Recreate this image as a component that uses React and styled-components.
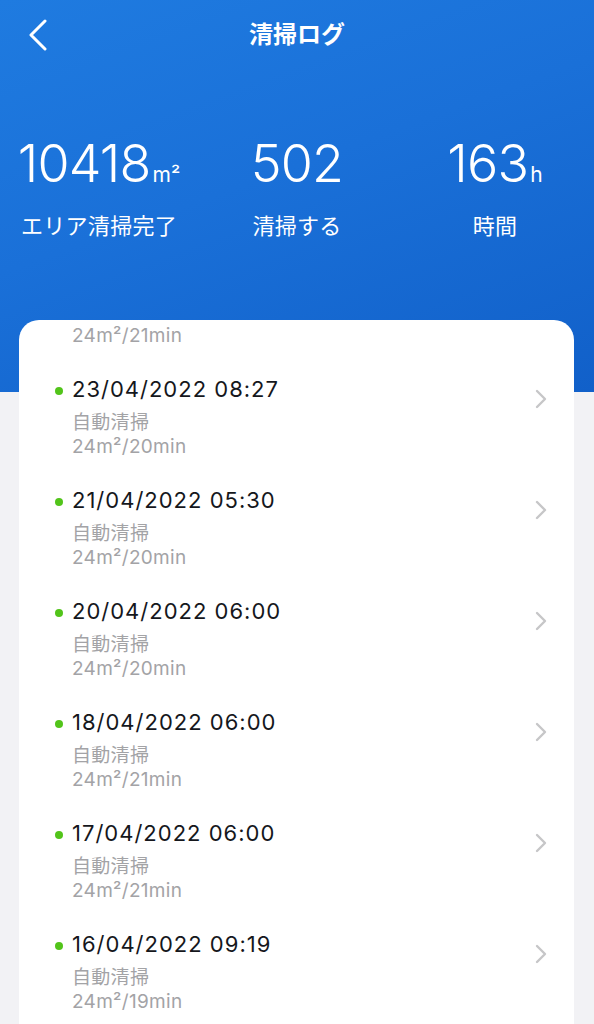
import React from "react";
import styled, { createGlobalStyle } from "styled-components";

const Global = createGlobalStyle`
  html, body { margin: 0; padding: 0; }
  body {
    background: #f2f2f5;
    font-family: Inter, "Noto Sans CJK JP", "Noto Sans", sans-serif;
    -webkit-font-smoothing: antialiased;
    overflow: hidden;
  }
`;

const Page = styled.div`
  width: 594px;
  height: 1024px;
  overflow: hidden;
  background: #f2f2f5;
`;

const Header = styled.header`
  height: 392px;
  background: linear-gradient(160deg, #1f7be0 0%, #1a70d8 45%, #1160c9 100%);
  color: #fff;
  display: flex;
  flex-direction: column;
`;

const NavBar = styled.div`
  height: 70px;
  display: grid;
  grid-template-columns: 80px 1fr 80px;
  align-items: center;
`;

const BackButton = styled.button`
  background: none;
  border: 0;
  padding: 0 0 0 28px;
  height: 40px;
  display: flex;
  align-items: center;
  cursor: pointer;
`;

const Title = styled.h1`
  margin: 0;
  text-align: center;
  font-size: 24px;
  font-weight: 700;
  line-height: 70px;
  color: #fff;
`;

const Stats = styled.div`
  display: grid;
  grid-template-columns: repeat(3, 1fr);
  margin-top: 64px;
`;

const Stat = styled.div`
  display: flex;
  flex-direction: column;
  align-items: center;
`;

const StatValue = styled.div`
  font-family: Inter, "Noto Sans", sans-serif;
  font-size: 52px;
  font-weight: 300;
  height: 60px;
  line-height: 60px;
  letter-spacing: -0.8px;
  white-space: nowrap;
`;

const Unit = styled.span`
  font-size: 21px;
  font-weight: 400;
  line-height: 1;
  letter-spacing: 0;
  margin-left: 2px;
`;

const StatLabel = styled.div`
  margin-top: 19px;
  font-size: 22px;
  line-height: 26px;
  font-weight: 400;
  letter-spacing: 0.3px;
  white-space: nowrap;
`;

const Card = styled.section`
  margin: -72px 20px 0 19px;
  background: #fff;
  border-radius: 20px 20px 0 0;
  height: 760px;
  overflow: hidden;
`;

const List = styled.ul`
  list-style: none;
  margin: -70px 0 0;
  padding: 0;
`;

const Row = styled.li`
  position: relative;
  display: grid;
  grid-template-columns: 8px 1fr;
  column-gap: 9px;
  padding: 14px 0 13px 36px;
`;

const Dot = styled.span`
  width: 8px;
  height: 8px;
  border-radius: 50%;
  background: #52c41a;
  margin-top: 12px;
`;

const Info = styled.div`
  display: flex;
  flex-direction: column;
`;

const DateText = styled.div`
  font-family: Inter, "Noto Sans", sans-serif;
  font-size: 22px;
  line-height: 28px;
  color: #15171c;
  letter-spacing: 1px;
  margin-bottom: 8px;
`;

const SubText = styled.div`
  font-size: 19px;
  line-height: 24px;
  color: #a3a3a6;
  letter-spacing: 0.3px;
`;

const Chevron = styled.svg`
  position: absolute;
  right: 26px;
  top: 28px;
`;

const BackIcon = () => (
  <svg width="20" height="32" viewBox="0 0 20 32" fill="none">
    <path d="M17 2 L3 16 L17 30" stroke="#fff" strokeWidth="3" strokeLinecap="round" strokeLinejoin="round" />
  </svg>
);

const logs = [
  { date: "24/04/2022 06:00", mode: "自動清掃", stat: "24m²/21min" },
  { date: "23/04/2022 08:27", mode: "自動清掃", stat: "24m²/20min" },
  { date: "21/04/2022 05:30", mode: "自動清掃", stat: "24m²/20min" },
  { date: "20/04/2022 06:00", mode: "自動清掃", stat: "24m²/20min" },
  { date: "18/04/2022 06:00", mode: "自動清掃", stat: "24m²/21min" },
  { date: "17/04/2022 06:00", mode: "自動清掃", stat: "24m²/21min" },
  { date: "16/04/2022 09:19", mode: "自動清掃", stat: "24m²/19min" },
];

const stats = [
  { value: "10418", unit: "m²", label: "エリア清掃完了" },
  { value: "502", unit: "", label: "清掃する" },
  { value: "163", unit: "h", label: "時間" },
];

export default function App() {
  return (
    <Page>
      <Global />
      <Header>
        <NavBar>
          <BackButton aria-label="back">
            <BackIcon />
          </BackButton>
          <Title>清掃ログ</Title>
          <span />
        </NavBar>
        <Stats>
          {stats.map((s) => (
            <Stat key={s.label}>
              <StatValue>
                {s.value}
                {s.unit && <Unit>{s.unit}</Unit>}
              </StatValue>
              <StatLabel>{s.label}</StatLabel>
            </Stat>
          ))}
        </Stats>
      </Header>
      <Card>
        <List>
          {logs.map((l) => (
            <Row key={l.date}>
              <Dot />
              <Info>
                <DateText>{l.date}</DateText>
                <SubText>{l.mode}</SubText>
                <SubText>{l.stat}</SubText>
              </Info>
              <Chevron width="14" height="20" viewBox="0 0 14 20" fill="none">
                <path d="M3 2 L11 10 L3 18" stroke="#c6c6c8" strokeWidth="2.4" strokeLinecap="round" strokeLinejoin="round" />
              </Chevron>
            </Row>
          ))}
        </List>
      </Card>
    </Page>
  );
}
